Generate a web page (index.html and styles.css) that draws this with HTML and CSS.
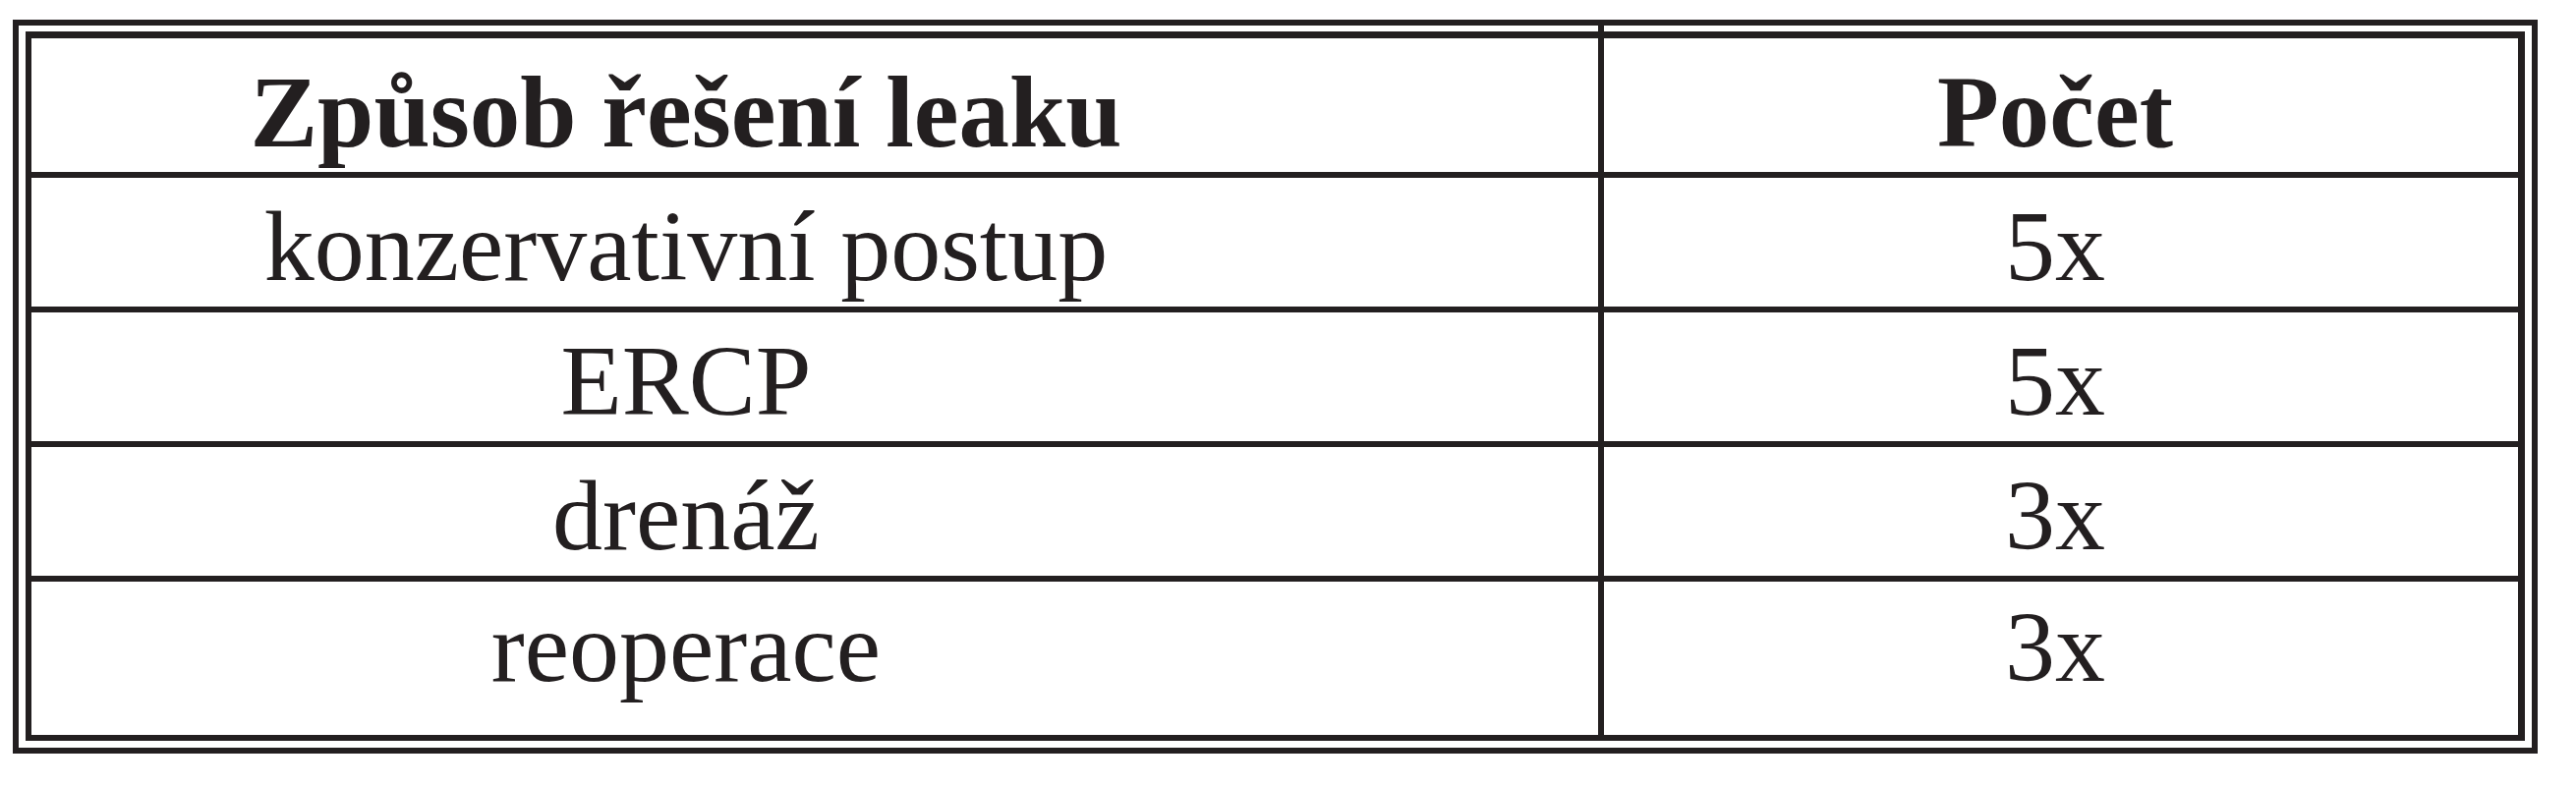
FILE: index.html
```html
<!DOCTYPE html>
<html lang="cs">
<head>
<meta charset="utf-8">
<title>Způsob řešení leaku</title>
<link rel="stylesheet" href="styles.css">
</head>
<body>
<div class="frame">
  <div class="table">
    <div class="cell c1 head first">Způsob řešení leaku</div>
    <div class="cell c2 head">Počet</div>
    <div class="cell c1 r">konzervativní postup</div>
    <div class="cell c2 r">5x</div>
    <div class="cell c1 r">ERCP</div>
    <div class="cell c2 r">5x</div>
    <div class="cell c1 r">drenáž</div>
    <div class="cell c2 r">3x</div>
    <div class="cell c1 r last">reoperace</div>
    <div class="cell c2 r last">3x</div>
  </div>
</div>
</body>
</html>
```

FILE: styles.css
```css
html, body {
  margin: 0;
  padding: 0;
  background: #ffffff;
}
body {
  width: 2621px;
  height: 800px;
  font-family: "Liberation Serif", "Times New Roman", serif;
  color: #231f20;
}
.frame {
  box-sizing: border-box;
  margin: 20px 0 0 13px;
  width: 2569px;
  border: 6px solid #231f20;
  padding: 6px 7px 7px 7px;
}
.table {
  border-style: solid;
  border-color: #231f20;
  border-width: 7px 7px 6px 6px;
  display: grid;
  grid-template-columns: 1600px 930px;
}
.cell {
  box-sizing: border-box;
  border-bottom: 6px solid #231f20;
  text-align: center;
  line-height: 1;
  white-space: nowrap;
}
.c1 {
  border-right: 6px solid #231f20;
  padding-right: 262px;
}
.c2 {
  padding-right: 12px;
}
.head {
  height: 142px;
  padding-top: 24px;
  font-size: 103px;
  font-weight: bold;
}
.first {
  position: relative;
}
.first::after {
  content: "";
  position: absolute;
  right: -6px;
  top: -13px;
  width: 6px;
  height: 13px;
  background: #231f20;
}
.r {
  height: 137px;
  padding-top: 19px;
  font-size: 102px;
}
.r.last {
  height: 156px;
  border-bottom: 0;
  padding-top: 16px;
}
```
